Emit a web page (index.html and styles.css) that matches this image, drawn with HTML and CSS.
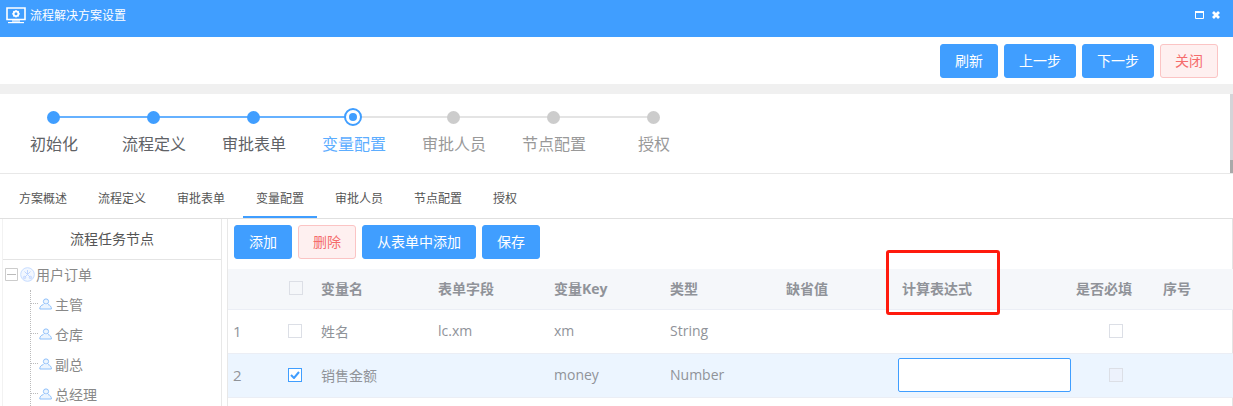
FILE: index.html
```html
<!DOCTYPE html>
<html lang="zh-CN">
<head>
<meta charset="utf-8">
<title>流程解决方案设置</title>
<link rel="stylesheet" href="styles.css">
</head>
<body>
<div class="page">
  <header class="titlebar">
    <div class="title">
      <svg class="title-icon" width="20" height="17" viewBox="0 0 20 17">
        <path d="M1 1h18v11.5H1z" fill="none" stroke="#fff" stroke-width="1.6"/>
        <path d="M2 15h16v1.2H2z" fill="#fff"/>
        <path d="M6 12.5h8V15H6z" fill="#fff" opacity=".6"/>
        <circle cx="10" cy="6.8" r="2.4" fill="none" stroke="#fff" stroke-width="1.8"/>
        <path d="M10 3v1.3M10 9.3v1.3M6.2 6.8h1.3M12.5 6.8h1.3M7.4 4.2l.9.9M11.7 8.5l.9.9M12.6 4.2l-.9.9M8.3 8.5l-.9.9" stroke="#fff" stroke-width="1.2"/>
      </svg>
      <span>流程解决方案设置</span>
    </div>
    <div class="win-controls">
      <svg width="9" height="8" viewBox="0 0 9 8"><path d="M.5 .5h8v7h-8z" fill="none" stroke="#fff"/><path d="M0 0h9v2H0z" fill="#fff"/></svg>
      <svg width="8" height="8" viewBox="0 0 8 8"><path d="M1 1l6 6M7 1L1 7" stroke="#fff" stroke-width="2.8"/></svg>
    </div>
  </header>

  <div class="actions">
    <button class="btn primary">刷新</button>
    <button class="btn primary">上一步</button>
    <button class="btn primary">下一步</button>
    <button class="btn danger">关闭</button>
  </div>

  <section class="steps">
    <div class="step done"><div class="marker"><i class="dot"></i></div><div class="label">初始化</div></div>
    <div class="step done"><div class="marker"><i class="dot"></i></div><div class="label">流程定义</div></div>
    <div class="step done-next"><div class="marker"><i class="dot"></i></div><div class="label">审批表单</div></div>
    <div class="step current"><div class="marker"><i class="ring"></i></div><div class="label">变量配置</div></div>
    <div class="step pending"><div class="marker"><i class="dot"></i></div><div class="label">审批人员</div></div>
    <div class="step pending"><div class="marker"><i class="dot"></i></div><div class="label">节点配置</div></div>
    <div class="step pending last"><div class="marker"><i class="dot"></i></div><div class="label">授权</div></div>
    <div class="scrollbar"></div>
  </section>

  <nav class="tabs">
    <a class="tab">方案概述</a>
    <a class="tab">流程定义</a>
    <a class="tab">审批表单</a>
    <a class="tab active">变量配置</a>
    <a class="tab">审批人员</a>
    <a class="tab">节点配置</a>
    <a class="tab">授权</a>
  </nav>

  <div class="content">
    <aside class="tree-panel">
      <div class="tree-title">流程任务节点</div>
      <div class="tree-root">
        <svg class="collapse" width="13" height="13" viewBox="0 0 13 13"><path d="M.5 .5h12v12H.5z" fill="#fff" stroke="#ccc"/><path d="M2 6.5h9" stroke="#bbb"/></svg>
        <svg class="root-icon" width="15" height="15" viewBox="0 0 15 15"><circle cx="7.5" cy="7.5" r="6.8" fill="#f2f7ff" stroke="#c6dcff"/><path d="M4.5 4.5l6 6M10.5 4.5l-6 6M7.5 3v4.5" stroke="#c0d6ff" fill="none"/><circle cx="4.5" cy="10.5" r="1.2" fill="none" stroke="#c0d6ff"/><circle cx="10.5" cy="10.5" r="1.2" fill="none" stroke="#c0d6ff"/></svg>
        <span>用户订单</span>
      </div>
      <ul class="tree-list">
        <li class="tree-node"><svg width="13" height="12" viewBox="0 0 13 12"><circle cx="7" cy="3.5" r="2.6" fill="#ecf5ff" stroke="#8fc0fa"/><path d="M4.5 6.5C2 7.2 .8 8.6.8 11h11.6c0-2.4-1.2-3.8-3.4-4.5" fill="#ecf5ff" stroke="#8fc0fa"/></svg><span>主管</span></li>
        <li class="tree-node"><svg width="13" height="12" viewBox="0 0 13 12"><circle cx="7" cy="3.5" r="2.6" fill="#ecf5ff" stroke="#8fc0fa"/><path d="M4.5 6.5C2 7.2 .8 8.6.8 11h11.6c0-2.4-1.2-3.8-3.4-4.5" fill="#ecf5ff" stroke="#8fc0fa"/></svg><span>仓库</span></li>
        <li class="tree-node"><svg width="13" height="12" viewBox="0 0 13 12"><circle cx="7" cy="3.5" r="2.6" fill="#ecf5ff" stroke="#8fc0fa"/><path d="M4.5 6.5C2 7.2 .8 8.6.8 11h11.6c0-2.4-1.2-3.8-3.4-4.5" fill="#ecf5ff" stroke="#8fc0fa"/></svg><span>副总</span></li>
        <li class="tree-node"><svg width="13" height="12" viewBox="0 0 13 12"><circle cx="7" cy="3.5" r="2.6" fill="#ecf5ff" stroke="#8fc0fa"/><path d="M4.5 6.5C2 7.2 .8 8.6.8 11h11.6c0-2.4-1.2-3.8-3.4-4.5" fill="#ecf5ff" stroke="#8fc0fa"/></svg><span>总经理</span></li>
      </ul>
    </aside>

    <main class="main">
      <div class="toolbar">
        <button class="btn primary">添加</button>
        <button class="btn danger">删除</button>
        <button class="btn primary">从表单中添加</button>
        <button class="btn primary">保存</button>
      </div>
      <table class="grid">
        <colgroup>
          <col class="c-idx"><col class="c-check"><col class="c-name"><col class="c-std"><col class="c-std"><col class="c-std"><col class="c-std"><col class="c-calc"><col class="c-req"><col class="c-seq">
        </colgroup>
        <thead>
          <tr>
            <th></th>
            <th class="check-cell"><i class="box head-box"></i></th>
            <th>变量名</th><th>表单字段</th><th>变量Key</th><th>类型</th><th>缺省值</th>
            <th>计算表达式</th><th class="req-head">是否必填</th><th>序号</th>
          </tr>
        </thead>
        <tbody>
          <tr>
            <td class="idx">1</td>
            <td class="check-cell"><i class="box"></i></td>
            <td>姓名</td><td>lc.xm</td><td>xm</td><td>String</td><td></td><td></td>
            <td class="req-cell"><i class="box"></i></td><td></td>
          </tr>
          <tr class="selected">
            <td class="idx">2</td>
            <td class="check-cell"><i class="box checked"><svg width="10" height="8" viewBox="0 0 10 8"><path d="M1 4l3 3 5-6" fill="none" stroke="#409eff" stroke-width="2"/></svg></i></td>
            <td>销售金额</td><td></td><td>money</td><td>Number</td><td></td>
            <td class="calc-cell"><input class="calc-input" type="text"></td>
            <td class="req-cell"><i class="box muted"></i></td><td></td>
          </tr>
        </tbody>
      </table>
      <div class="highlight"></div>
    </main>
  </div>
</div>
</body>
</html>
```
FILE: styles.css
```css
* { box-sizing: border-box; }
html, body { margin: 0; padding: 0; }
body {
  width: 1233px;
  height: 406px;
  overflow: hidden;
  background: #fff;
  font-family: "Open Sans", "Noto Sans CJK SC", sans-serif;
  color: #606266;
}
.page { display: flex; flex-direction: column; height: 406px; overflow: hidden; }

.titlebar {
  flex: none;
  height: 37px;
  background: #409eff;
  color: #fff;
  display: flex;
  align-items: center;
  justify-content: space-between;
  padding: 0 13px 7px 6px;
  font-size: 12px;
}
.title { display: flex; align-items: center; gap: 4px; }
.title-icon { display: block; }
.win-controls { display: flex; align-items: center; gap: 8px; }
.win-controls svg { display: block; }

.actions {
  flex: none;
  height: 47px;
  display: flex;
  justify-content: flex-end;
  gap: 6px;
  padding: 7px 15px 0 0;
  background: #fff;
}
.btn {
  height: 34px;
  padding: 0 14px;
  border: 1px solid #409eff;
  border-radius: 3px;
  font: inherit;
  font-size: 14px;
  line-height: 32px;
  background: #409eff;
  color: #fff;
}
.btn.danger { background: #fef0f0; border-color: #fbc4c4; color: #f56c6c; }

.steps {
  flex: none;
  position: relative;
  height: 90px;
  padding: 14px 0 0 3px;
  border-top: 10px solid #f0f0f0;
  border-bottom: 1px solid #e8e8e8;
  display: flex;
}
.step { position: relative; width: 100px; display: flex; flex-direction: column; align-items: center; }
.marker {
  position: relative;
  z-index: 1;
  height: 18px;
  display: flex;
  align-items: center;
  justify-content: center;
  margin-bottom: 6px;
}
.dot { display: block; width: 13px; height: 13px; border-radius: 50%; background: #409eff; }
.ring {
  display: flex;
  width: 18px;
  height: 18px;
  border-radius: 50%;
  border: 2px solid #409eff;
  background: #fff;
}
.ring::after {
  content: "";
  width: 8px;
  height: 8px;
  margin: auto;
  border-radius: 50%;
  background: #409eff;
}
.label { font-size: 16px; line-height: 24px; white-space: nowrap; color: #606266; padding-left: 2px; }
.step::after {
  content: "";
  position: absolute;
  left: 50%;
  top: 8px;
  width: 100px;
  height: 2px;
  background: #66b1ff;
}
.current::after, .pending::after { background: #e4e4e4; }
.last::after { display: none; }
.current .label { color: #5cadff; }
.pending .label { color: #999; }
.pending .dot { background: #ccc; }
.scrollbar {
  position: absolute;
  right: 0;
  top: 0;
  bottom: 0;
  width: 3px;
  background: linear-gradient(#d4d4d8 0, #d4d4d8 84%, #a9a9a9 84%, #a9a9a9 100%);
}

.tabs {
  flex: none;
  height: 45px;
  display: flex;
  gap: 5px;
  padding-left: 6px;
  border-bottom: 1px solid #e0e0e0;
}
.tab {
  padding: 0 13px;
  width: 74px;
  line-height: 49px;
  height: 44px;
  font-size: 12px;
  color: #555;
  white-space: nowrap;
}
.tab.active { border-bottom: 2px solid #409eff; }
.tab:last-child { width: auto; }

.content { flex: 1; display: flex; min-height: 0; padding-left: 2px; }
.tree-panel {
  flex: none;
  width: 220px;
  border-right: 1px solid #e8e8e8;
  border-left: 1px solid #f2f2f2;
  overflow: hidden;
}
.tree-title {
  height: 41px;
  line-height: 40px;
  text-align: center;
  font-size: 14px;
  color: #555;
  border-bottom: 1px solid #e4e4e4;
}
.tree-root {
  height: 30px;
  padding: 0 0 2px 2px;
  display: flex;
  align-items: center;
  font-size: 14px;
  color: #888;
}
.collapse { display: block; margin-right: 2px; }
.root-icon { display: block; margin-right: 1px; }
.tree-list {
  list-style: none;
  margin: 0 0 0 27px;
  padding: 0;
  border-left: 1px dotted #bbb;
}
.tree-node {
  position: relative;
  height: 30px;
  padding: 0 0 2px 8px;
  display: flex;
  align-items: center;
  gap: 3px;
  font-size: 14px;
  color: #888;
}
.tree-node::before {
  content: "";
  position: absolute;
  left: 0;
  top: 13px;
  width: 7px;
  border-top: 1px dotted #bbb;
}
.tree-node svg { display: block; }

.main {
  position: relative;
  flex: 1;
  min-width: 0;
  margin-left: 5px;
  border-left: 1px solid #e8e8e8;
  border-right: 1px solid #e4e4e4;
}
.toolbar { display: flex; gap: 6px; padding: 6px 0 10px 6px; height: 50px; }
.grid {
  table-layout: fixed;
  border-collapse: separate;
  border-spacing: 0;
  width: 1005px;
  font-size: 14px;
}
.c-idx { width: 50px; }
.c-check { width: 32px; }
.c-name { width: 117px; }
.c-std { width: 116px; }
.c-calc { width: 182px; }
.c-req { width: 79px; }
.c-seq { width: 81px; }
.grid th {
  height: 41px;
  padding: 0 0 2px 11px;
  text-align: left;
  font-weight: 700;
  font-size: 14px;
  background: #f5f7fa;
  color: #909399;
  border-bottom: 1px solid #ebeef5;
  white-space: nowrap;
}
.grid td {
  height: 44px;
  padding: 0 0 2px 11px;
  color: #909399;
  border-bottom: 1px solid #ebeef5;
  white-space: nowrap;
}
.grid th.req-head { padding-left: 3px; }
.grid td.idx { padding-left: 5px; font-size: 15px; }
.grid .check-cell { padding-left: 10px; }
.grid td.req-cell { padding-left: 36px; }
.grid td.calc-cell { padding-left: 7px; }
.selected td { background: #ecf5ff; }
.box {
  display: flex;
  align-items: center;
  justify-content: center;
  width: 14px;
  height: 14px;
  border: 1px solid #dcdfe6;
  background: #fff;
}
.head-box { margin-left: 1px; background: #f5f7fa; }
.box.checked { border-color: #409eff; }
.box.muted { background: #edf2fc; }
.calc-input {
  display: block;
  width: 173px;
  height: 34px;
  padding: 0 8px;
  border: 1px solid #409eff;
  border-radius: 2px;
  background: #fff;
  outline: none;
}
.highlight {
  position: absolute;
  left: 658px;
  top: 31px;
  width: 114px;
  height: 65px;
  border: 3px solid #ff1a0d;
  border-radius: 3px;
  pointer-events: none;
}
```
